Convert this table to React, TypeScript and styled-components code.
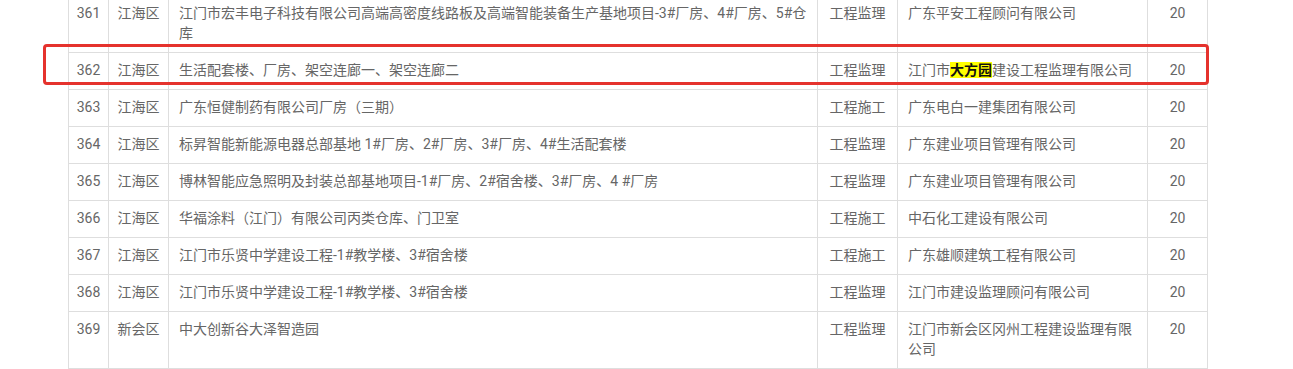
import React from 'react';
import styled, { createGlobalStyle } from 'styled-components';

const GlobalStyle = createGlobalStyle`
  html, body {
    margin: 0;
    padding: 0;
    background: #fff;
    overflow: hidden;
  }
  body {
    font-family: Roboto, 'Noto Sans CJK SC', sans-serif;
    font-size: 14px;
    color: #666;
  }
`;

const Page = styled.div`
  height: 369px;
  overflow: hidden;
  padding-left: 68px;
`;

// table is scrolled so row 361 is partly cut off at the top
const TableWrap = styled.div`
  position: relative;
  width: 1140px;
  margin-top: -5px;
`;

const Table = styled.table`
  border-collapse: collapse;
  table-layout: fixed;
  width: 1140px;
`;

const Col = styled.col<{ $w: number }>`
  width: ${({ $w }) => $w}px;
`;

const Cell = styled.td<{ $center?: boolean }>`
  border: 1px solid #dedede;
  padding: 7px 10px 9px;
  line-height: 20px;
  vertical-align: top;
  text-align: ${({ $center }) => ($center ? 'center' : 'left')};
  word-break: break-all;
`;

const NarrowCell = styled(Cell)`
  padding-left: 2px;
  padding-right: 2px;
`;

const Mark = styled.mark`
  background: #ffff00;
  color: #111;
  font-weight: 700;
  padding: 0;
`;

// red annotation frame around the highlighted row
const Frame = styled.div`
  position: absolute;
  left: -25px;
  top: 49px;
  width: 1160px;
  height: 35px;
  border: 3px solid #e5322d;
  border-radius: 4px;
  pointer-events: none;
`;

type Row = {
  no: number;
  area: string;
  name: string;
  kind: string;
  company: React.ReactNode;
  score: number;
};

const colWidths = [40, 60, 649, 80, 250, 60];

const rows: Row[] = [
  {
    no: 361,
    area: '江海区',
    name: '江门市宏丰电子科技有限公司高端高密度线路板及高端智能装备生产基地项目-3#厂房、4#厂房、5#仓库',
    kind: '工程监理',
    company: '广东平安工程顾问有限公司',
    score: 20,
  },
  {
    no: 362,
    area: '江海区',
    name: '生活配套楼、厂房、架空连廊一、架空连廊二',
    kind: '工程监理',
    company: (
      <>
        江门市<Mark>大方园</Mark>建设工程监理有限公司
      </>
    ),
    score: 20,
  },
  { no: 363, area: '江海区', name: '广东恒健制药有限公司厂房（三期）', kind: '工程施工', company: '广东电白一建集团有限公司', score: 20 },
  {
    no: 364,
    area: '江海区',
    name: '标昇智能新能源电器总部基地 1#厂房、2#厂房、3#厂房、4#生活配套楼',
    kind: '工程监理',
    company: '广东建业项目管理有限公司',
    score: 20,
  },
  {
    no: 365,
    area: '江海区',
    name: '博林智能应急照明及封装总部基地项目-1#厂房、2#宿舍楼、3#厂房、4 #厂房',
    kind: '工程监理',
    company: '广东建业项目管理有限公司',
    score: 20,
  },
  { no: 366, area: '江海区', name: '华福涂料（江门）有限公司丙类仓库、门卫室', kind: '工程施工', company: '中石化工建设有限公司', score: 20 },
  { no: 367, area: '江海区', name: '江门市乐贤中学建设工程-1#教学楼、3#宿舍楼', kind: '工程施工', company: '广东雄顺建筑工程有限公司', score: 20 },
  { no: 368, area: '江海区', name: '江门市乐贤中学建设工程-1#教学楼、3#宿舍楼', kind: '工程监理', company: '江门市建设监理顾问有限公司', score: 20 },
  { no: 369, area: '新会区', name: '中大创新谷大泽智造园', kind: '工程监理', company: '江门市新会区冈州工程建设监理有限公司', score: 20 },
];

export default function App() {
  return (
    <>
      <GlobalStyle />
      <Page>
        <TableWrap>
          <Table>
            <colgroup>
              {colWidths.map((w, i) => (
                <Col key={i} $w={w} />
              ))}
            </colgroup>
            <tbody>
              {rows.map((r) => (
                <tr key={r.no}>
                  <NarrowCell $center>{r.no}</NarrowCell>
                  <NarrowCell $center>{r.area}</NarrowCell>
                  <Cell>{r.name}</Cell>
                  <NarrowCell $center>{r.kind}</NarrowCell>
                  <Cell>{r.company}</Cell>
                  <NarrowCell $center>{r.score}</NarrowCell>
                </tr>
              ))}
            </tbody>
          </Table>
          <Frame />
        </TableWrap>
      </Page>
    </>
  );
}
